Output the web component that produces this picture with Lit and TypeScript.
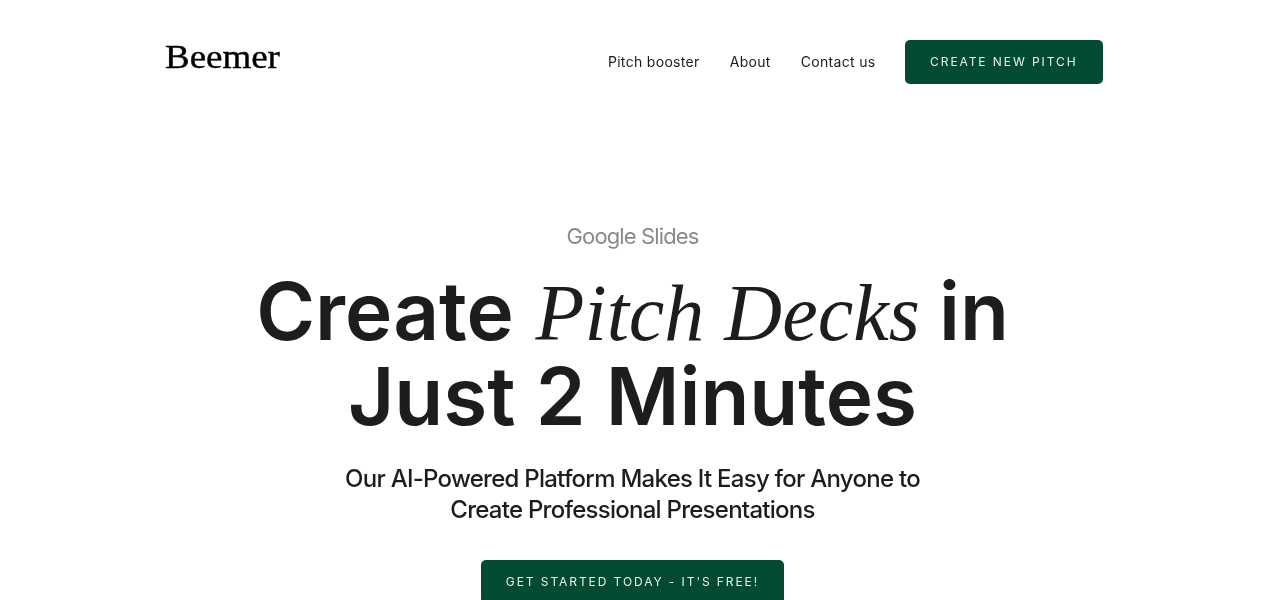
import { LitElement, html, css } from 'lit';
import { customElement } from 'lit/decorators.js';

@customElement('app-root')
export class AppRoot extends LitElement {
  static styles = css`
    :host {
      display: block;
      height: 600px;
      overflow: hidden;
      background: #fff;
      font-family: Inter, sans-serif;
      color: #1d1d1f;
    }
    .page {
      width: 941px;
      margin-left: 162px;
      will-change: transform;
    }
    .nav {
      display: flex;
      justify-content: space-between;
      align-items: flex-start;
      padding-top: 40px;
    }
    .logo {
      margin-left: 3px;
      font-family: 'Liberation Serif', serif;
      font-size: 33px;
      line-height: 34px;
      color: #000;
      transform: scaleX(1.12);
      transform-origin: left center;
      -webkit-text-stroke: 0.4px #000;
    }
    .links {
      display: flex;
      align-items: center;
      gap: 30px;
    }
    .links a {
      font-size: 14px;
      line-height: 42px;
      letter-spacing: 0.32px;
      color: #1d1d1f;
    }
    .btn {
      display: block;
      border: 0;
      border-radius: 5px;
      background: #034a32;
      color: #e9f0ed;
      font-family: Inter, sans-serif;
      font-size: 12px;
      font-weight: 400;
      line-height: 44px;
      height: 44px;
      letter-spacing: 1.92px;
      padding: 0 25px;
    }
    .links .btn {
      margin-left: -1px;
      padding: 0 25.5px;
    }
    .hero {
      display: flex;
      flex-direction: column;
      align-items: center;
      text-align: center;
      padding-top: 136px;
    }
    .kicker {
      font-size: 22px;
      line-height: 32px;
      letter-spacing: -0.88px;
      color: #8a8a8c;
    }
    h1 {
      margin: 16px 0 0;
      font-size: 80px;
      line-height: 85px;
      font-weight: 600;
      color: #1d1d1f;
    }
    h1 em {
      font-family: 'Liberation Serif', serif;
      font-weight: 400;
      line-height: 0;
      margin: 0 -1px 0 1.5px;
    }
    .sub {
      margin: 25px 0 0;
      width: 620px;
      font-size: 24px;
      line-height: 31px;
      font-weight: 500;
      letter-spacing: -0.74px;
    }
    .hero .btn {
      margin-top: 35px;
    }
  `;

  render() {
    return html`
      <div class="page">
        <div class="nav">
          <div class="logo">Beemer</div>
          <div class="links">
            <a>Pitch booster</a>
            <a>About</a>
            <a>Contact us</a>
            <button class="btn">CREATE NEW PITCH</button>
          </div>
        </div>
        <div class="hero">
          <div class="kicker">Google Slides</div>
          <h1>Create <em>Pitch Decks</em> in<br />Just 2 Minutes</h1>
          <p class="sub">Our AI-Powered Platform Makes It Easy for Anyone to Create Professional Presentations</p>
          <button class="btn">GET STARTED TODAY - IT'S FREE!</button>
        </div>
      </div>
    `;
  }
}
